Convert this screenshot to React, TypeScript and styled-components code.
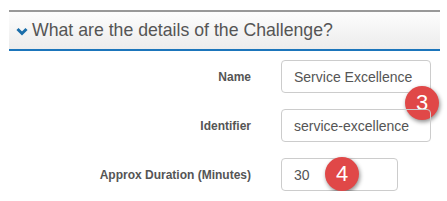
import styled, { createGlobalStyle } from "styled-components";

const GlobalStyle = createGlobalStyle`
  html, body {
    margin: 0;
    padding: 0;
    background: #fff;
  }
  body {
    font-family: "Liberation Sans", Arial, sans-serif;
  }
`;

const Page = styled.div`
  padding: 10px 7px 0 9px;
  width: 447px;
  box-sizing: border-box;
`;

const Panel = styled.section``;

const PanelHeader = styled.div`
  height: 37px;
  display: flex;
  align-items: center;
  gap: 4px;
  padding-left: 7px;
  border-top: 2px solid #999;
  border-bottom: 2px solid #1b75bb;
  background: linear-gradient(to bottom, #fdfdfd, #ececec);
  color: #555;
  font-size: 17.7px;
`;

const Chevron = styled.svg`
  width: 12px;
  height: 9px;
  margin-top: 1px;
`;

const Form = styled.div`
  display: grid;
  grid-template-columns: 242px 150px;
  column-gap: 30px;
  row-gap: 16px;
  align-items: center;
  padding-top: 9px;
`;

const Label = styled.label`
  text-align: right;
  font-size: 12px;
  font-weight: bold;
  color: #555;
`;

const Field = styled.div<{ $width: number }>`
  position: relative;
  width: ${p => p.$width}px;
  height: 33px;
  box-sizing: border-box;
  border: 1px solid #ccc;
  border-radius: 4px;
  display: flex;
  align-items: center;
  padding-left: 12px;
  font-size: 14px;
  color: #555;
  white-space: nowrap;
`;

const Badge = styled.span<{ $left: number; $top: number }>`
  position: absolute;
  left: ${p => p.$left}px;
  top: ${p => p.$top}px;
  width: 34px;
  height: 34px;
  border-radius: 50%;
  background: #e04848;
  color: #fff;
  font-size: 22px;
  display: flex;
  align-items: center;
  justify-content: center;
  box-shadow: 1px 2px 4px rgba(0, 0, 0, 0.45);
`;

export default function App() {
  return (
    <Page>
      <GlobalStyle />
      <Panel>
        <PanelHeader>
          <Chevron viewBox="0 0 12 9">
            <path d="M1.5 2 L6 6.5 L10.5 2" fill="none" stroke="#1b6eaa" strokeWidth="3" />
          </Chevron>
          What are the details of the Challenge?
        </PanelHeader>
        <Form>
          <Label>Name</Label>
          <Field $width={150}>
            Service Excellence
            <Badge $left={123} $top={25}>3</Badge>
          </Field>
          <Label>Identifier</Label>
          <Field $width={150}>service-excellence</Field>
          <Label>Approx Duration (Minutes)</Label>
          <Field $width={117}>
            30
            <Badge $left={43} $top={-2}>4</Badge>
          </Field>
        </Form>
      </Panel>
    </Page>
  );
}
